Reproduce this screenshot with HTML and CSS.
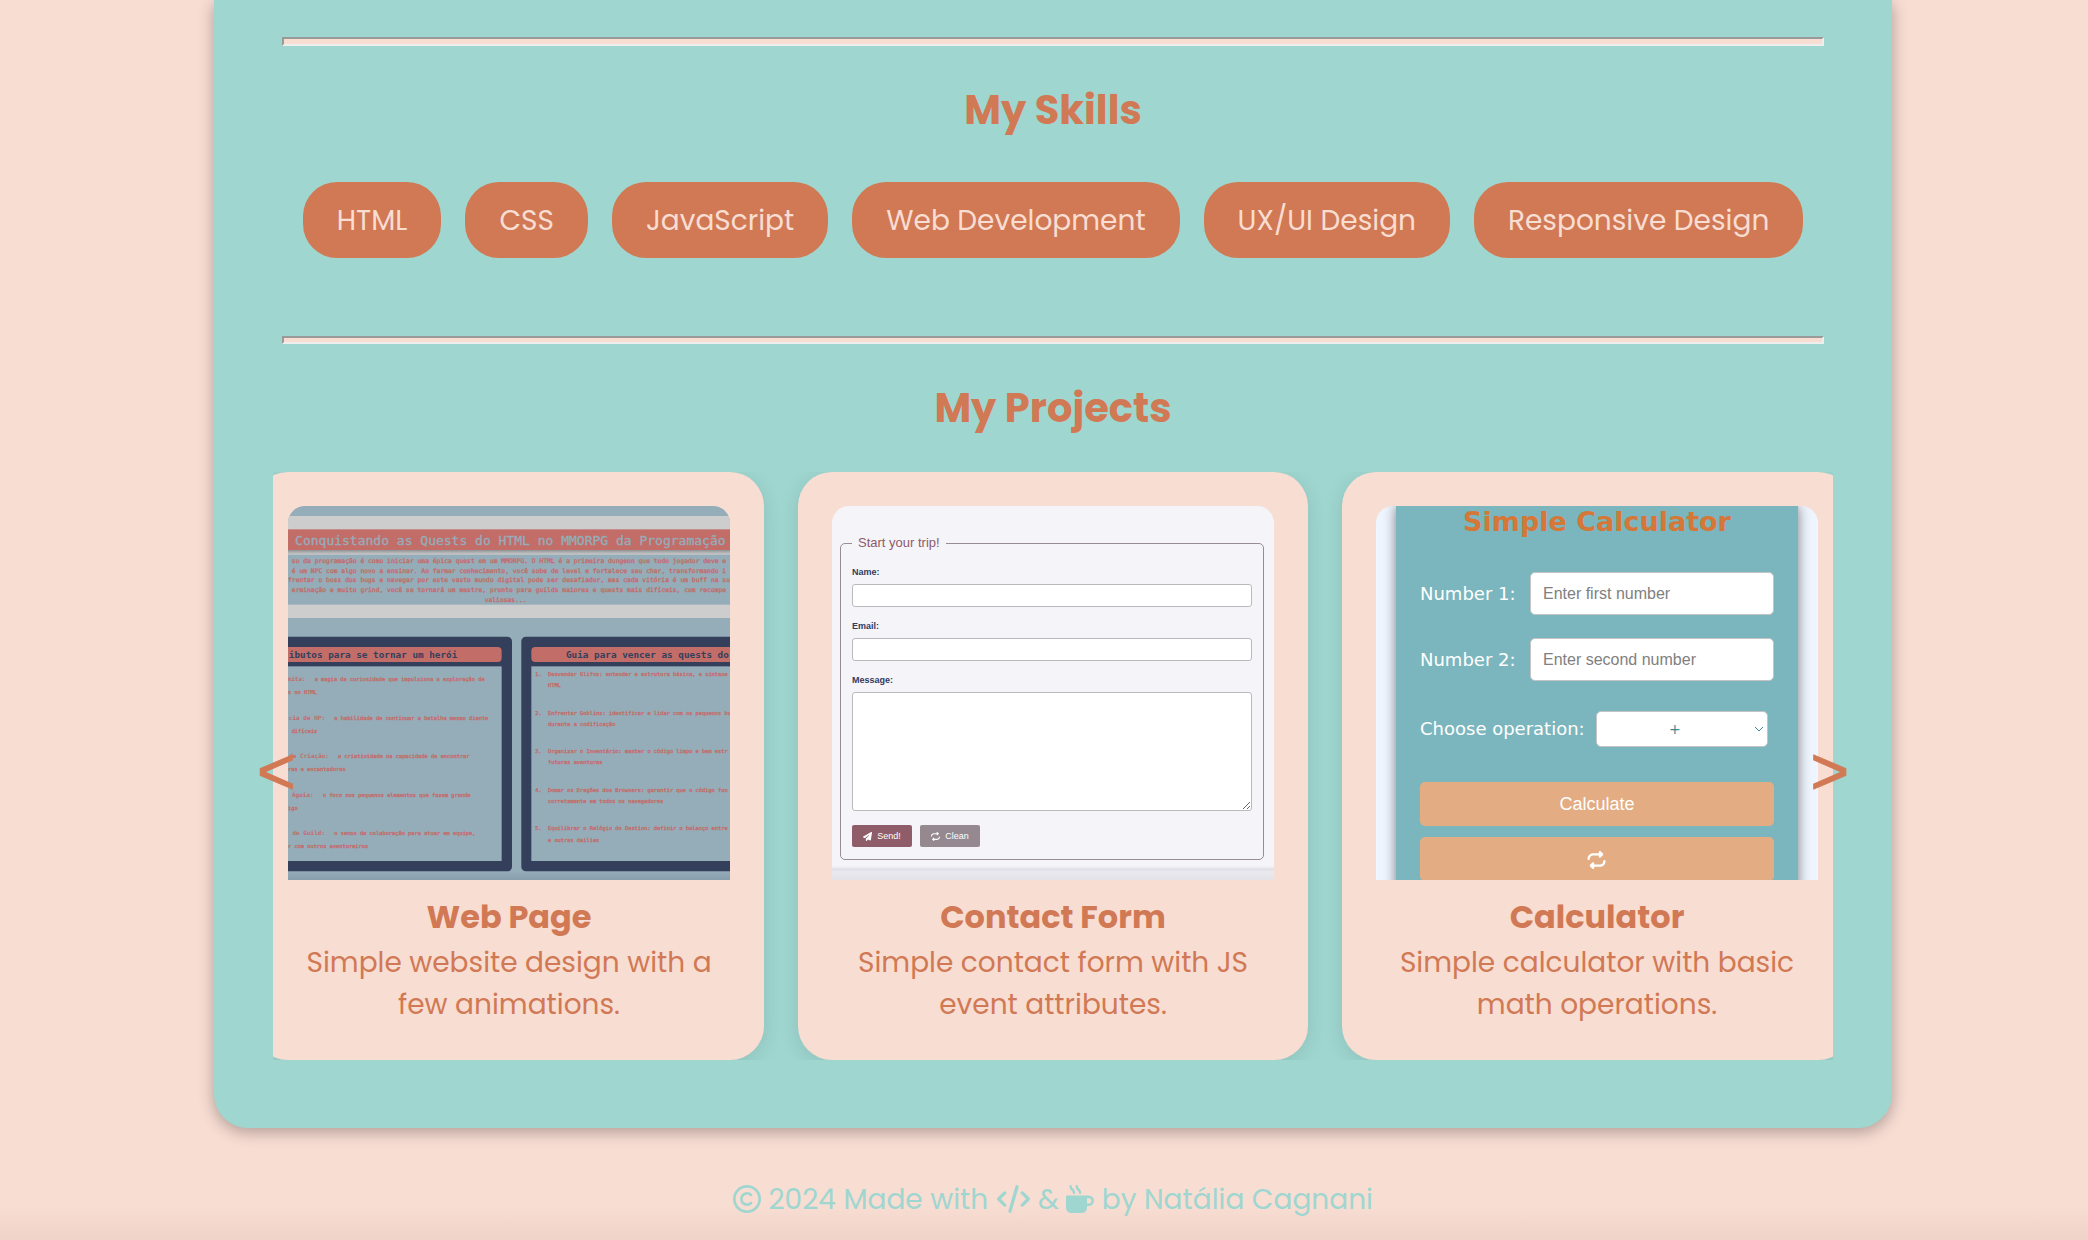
FILE: index.html
```html
<!DOCTYPE html>
<html lang="en">
<head>
<meta charset="utf-8">
<title>Natália Cagnani - Portfolio</title>
<link rel="stylesheet" href="styles.css">
</head>
<body>
<svg class="sprite" aria-hidden="true">
  <symbol id="repeat" viewBox="0 0 512 512"><path fill="currentColor" d="M0 224c0 17.700 14.300 32 32 32s32-14.300 32-32c0-53 43-96 96-96H320v32c0 12.900 7.800 24.600 19.800 29.600s25.700 2.200 34.900-6.900l64-64c12.500-12.500 12.500-32.800 0-45.300l-64-64c-9.200-9.200-22.900-11.900-34.900-6.900S320 19.100 320 32V64H160C71.600 64 0 135.600 0 224zm512 64c0-17.700-14.300-32-32-32s-32 14.300-32 32c0 53-43 96-96 96H192V352c0-12.900-7.800-24.600-19.800-29.600s-25.700-2.200-34.900 6.900l-64 64c-12.500 12.500-12.500 32.800 0 45.300l64 64c9.200 9.200 22.900 11.900 34.900 6.900s19.800-16.600 19.800-29.600V448H352c88.400 0 160-71.600 160-160z"/></symbol>
</svg>
<main class="panel">
  <hr class="rule">
  <section class="skills">
    <h2 class="heading">My Skills</h2>
    <ul class="skill-list">
      <li>HTML</li>
      <li>CSS</li>
      <li>JavaScript</li>
      <li>Web Development</li>
      <li>UX/UI Design</li>
      <li>Responsive Design</li>
    </ul>
  </section>
  <hr class="rule thin">
  <section class="projects">
    <h2 class="heading">My Projects</h2>
    <div class="carousel">
      <div class="track">
        <article class="card">
          <div class="thumb">
            <svg class="quest" viewBox="0 0 1326 1122" preserveAspectRatio="xMidYMid slice" role="img" aria-label="Web page preview">
              <defs>
                <linearGradient id="fade" x1="0" y1="0" x2="0" y2="1"><stop offset="0" stop-color="#8f9295"/><stop offset="1" stop-color="#cdcdcd"/></linearGradient>
                <linearGradient id="base" x1="0" y1="0" x2="0" y2="1"><stop offset="0" stop-color="#95acb9"/><stop offset="1" stop-color="#889ead"/></linearGradient>
              </defs>
              <rect width="1326" height="1122" fill="#95acb9"/>
              <rect y="1095" width="1326" height="27" fill="url(#base)"/>
              <rect y="30" width="1326" height="42" fill="#cdcdcd"/>
              <rect y="70" width="1326" height="62" fill="#c36d69"/>
              <rect y="132" width="1326" height="14" fill="url(#fade)"/>
              <rect y="296" width="1326" height="40" fill="#cdcdcd"/>
              <text class="q-title" x="667" y="117">Conquistando as Quests do HTML no MMORPG da Programação</text>
              <g class="q-intro">
                <text x="663" y="171">so da programação é como iniciar uma épica quest em um MMORPG. O HTML é a primeira dungeon que todo jogador deve e</text>
                <text x="663" y="200">é um NPC com algo novo a ensinar. Ao farmar conhecimento, você sobe de level e fortalece seu char, transformando i</text>
                <text x="663" y="229">frentar o boss dos bugs e navegar por este vasto mundo digital pode ser desafiador, mas cada vitória é um buff na su</text>
                <text x="663" y="258">erminação e muito grind, você se tornará um mestre, pronto para guilds maiores e quests mais difíceis, com recompe</text>
                <text x="653" y="287">valiosas...</text>
              </g>
              <rect x="-40" y="392" width="712" height="704" rx="14" fill="#333f5b"/>
              <rect x="700" y="392" width="700" height="704" rx="14" fill="#333f5b"/>
              <rect x="-40" y="423" width="681" height="45" rx="12" fill="#c36d69"/>
              <rect x="730" y="423" width="700" height="45" rx="12" fill="#c36d69"/>
              <rect x="-40" y="481" width="681" height="584" fill="#95acb9"/>
              <rect x="730" y="481" width="700" height="584" fill="#95acb9"/>
              <text class="q-head" x="508" y="456" text-anchor="end">ibutos para se tornar um herói</text>
              <text class="q-head" x="834" y="456">Guia para vencer as quests do</text>
              <g class="q-label">
                <text x="53" y="526">mita:</text>
                <text x="111" y="641">cia de HP:</text>
                <text x="123" y="756">de Criação:</text>
                <text x="77" y="872">Águia:</text>
                <text x="111" y="987">de Guild:</text>
              </g>
              <g class="q-item">
                <text x="80" y="526">a magia da curiosidade que impulsiona a exploração de</text>
                <text x="0" y="565">s no HTML</text>
                <text x="139" y="641">a habilidade de continuar a batalha mesmo diante</text>
                <text x="11" y="680">difíceis</text>
                <text x="150" y="756">a criatividade na capacidade de encontrar</text>
                <text x="0" y="795">ras e encantadoras</text>
                <text x="105" y="872">o foco nos pequenos elementos que fazem grande</text>
                <text x="0" y="911">igo</text>
                <text x="139" y="987">o senso de colaboração para atuar em equipe,</text>
                <text x="0" y="1026">r com outros aventureiros</text>
                <text x="742" y="511">1.</text><text x="780" y="511">Desvendar Glifos: entender a estrutura básica, a sintaxe</text>
                <text x="780" y="543">HTML</text>
                <text x="742" y="627">2.</text><text x="780" y="627">Enfrentar Goblins: identificar e lidar com os pequenos bu</text>
                <text x="780" y="659">durante a codificação</text>
                <text x="742" y="741">3.</text><text x="780" y="741">Organizar o Inventário: manter o código limpo e bem estr</text>
                <text x="780" y="775">futuras aventuras</text>
                <text x="742" y="857">4.</text><text x="780" y="857">Domar os Dragões dos Browsers: garantir que o código fun</text>
                <text x="780" y="891">corretamente em todos os navegadores</text>
                <text x="742" y="973">5.</text><text x="780" y="973">Equilibrar o Relógio do Destino: definir o balanço entre</text>
                <text x="780" y="1007">e outras dailies</text>
              </g>
            </svg>
          </div>
          <h3>Web Page</h3>
          <p>Simple website design with a few animations.</p>
        </article>
        <article class="card">
          <div class="thumb contact">
            <form>
              <fieldset>
                <legend>Start your trip!</legend>
                <label for="name">Name:</label>
                <input id="name" type="text">
                <label for="email">Email:</label>
                <input id="email" type="email">
                <label for="message">Message:</label>
                <textarea id="message"></textarea>
                <div class="actions">
                  <button type="button" class="send"><svg viewBox="0 0 512 512" aria-hidden="true"><path fill="currentColor" d="M498.100 5.600c10.100 7 15.400 19.100 13.500 31.200l-64 416c-1.500 9.700-7.400 18.200-16 23s-18.900 5.400-28 1.600L284 427.700l-68.500 74.100c-8.900 9.700-22.900 12.900-35.200 8.100S160 493.200 160 480V396.400c0-4 1.500-7.800 4.200-10.700L331.800 202.800c5.800-6.300 5.600-16-.4-22s-15.700-6.400-22-.7L106 360.800 17.700 316.600C7.100 311.300 .3 300.700 0 288.900s5.900-22.800 16.100-28.700l448-256c10.700-6.100 23.900-5.500 34 1.400z"/></svg>Send!</button>
                  <button type="button" class="clean"><svg aria-hidden="true"><use href="#repeat"/></svg>Clean</button>
                </div>
              </fieldset>
            </form>
          </div>
          <h3>Contact Form</h3>
          <p>Simple contact form with JS event attributes.</p>
        </article>
        <article class="card">
          <div class="thumb calc">
            <form class="calc-box">
              <h4>Simple Calculator</h4>
              <div class="field"><label for="n1">Number 1:</label><input id="n1" type="text" placeholder="Enter first number"></div>
              <div class="field"><label for="n2">Number 2:</label><input id="n2" type="text" placeholder="Enter second number"></div>
              <div class="field operation"><label for="op">Choose operation:</label>
                <span class="select"><select id="op"><option>+</option></select><svg viewBox="0 0 10 6" aria-hidden="true"><path d="M1 1l4 4 4-4" fill="none" stroke="currentColor"/></svg></span></div>
              <button type="button">Calculate</button>
              <button type="button" aria-label="Reset"><svg aria-hidden="true"><use href="#repeat"/></svg></button>
            </form>
          </div>
          <h3>Calculator</h3>
          <p>Simple calculator with basic math operations.</p>
        </article>
      </div>
      <button type="button" class="arrow prev">&lt;</button>
      <button type="button" class="arrow next">&gt;</button>
    </div>
  </section>
</main>
<footer class="footer">
  <p>
    <svg class="ico" viewBox="0 0 512 512" role="img" aria-label="Copyright"><g fill="none" stroke="currentColor" stroke-width="48" stroke-linecap="round"><circle cx="256" cy="256" r="232"/><path d="M330 330a104 104 0 1 1 0-148"/></g></svg>
    2024 Made with
    <svg class="ico wide" viewBox="0 0 640 512" role="img" aria-label="code"><g fill="none" stroke="currentColor" stroke-width="60" stroke-linecap="round" stroke-linejoin="round"><path d="M384 32L256 480M160 144L48 256l112 112M480 144l112 112-112 112"/></g></svg>
    &amp;
    <svg class="ico" viewBox="0 0 512 512" role="img" aria-label="coffee"><path fill="currentColor" fill-rule="evenodd" d="M24 192h392a96 96 0 0 1 0 192h-32v32a96 96 0 0 1-96 96H96a96 96 0 0 1-96-96V216a24 24 0 0 1 24-24zm360 48v96h32a48 48 0 0 0 0-96z"/><g fill="none" stroke="currentColor" stroke-width="44" stroke-linecap="round"><path d="M84 22c0 70 62 50 62 120M196 22c0 70 62 50 62 120"/></g></svg>
    by Natália Cagnani
  </p>
</footer>
</body>
</html>
```
FILE: styles.css
```css
:root {
  --peach: #f8ddd3;
  --mint: #9fd6d0;
  --clay: #d17954;
}

* { box-sizing: border-box; margin: 0; padding: 0; }

body {
  padding: 0 196px 0 214px;
  min-height: 100vh;
  background: linear-gradient(to top, #efd2c8 0, var(--peach) 34px);
  color: var(--clay);
  font-family: Poppins, Inter, sans-serif;
  font-size: 28px;
  line-height: 42px;
}

.sprite { display: none; }

.panel {
  padding: 37px 59px 68px;
  background: var(--mint);
  border-radius: 0 0 34px 34px;
  box-shadow: 0 4px 16px rgba(0, 0, 0, 0.3);
}

.rule {
  height: 9px;
  margin: 0 9px;
  background: var(--peach);
  border: 2px solid;
  border-color: #9a9a9a #eeeeee #eeeeee #9a9a9a;
}
.thin { height: 8px; }

.heading {
  padding: 34px 0;
  font-size: 40px;
  font-weight: 700;
  line-height: 60px;
  text-align: center;
}

.skills { padding-bottom: 78px; }

.skill-list {
  display: flex;
  flex-wrap: wrap;
  justify-content: center;
  gap: 24px;
  padding-top: 8px;
  list-style: none;
}

.skill-list li {
  padding: 18px 34px 16px;
  border-radius: 34px;
  background: var(--clay);
  color: var(--peach);
  text-align: center;
  white-space: nowrap;
}

.carousel { position: relative; }

.track {
  display: flex;
  justify-content: center;
  gap: 34px;
  overflow: hidden;
}

.card {
  flex: 0 0 calc((100% - 30px) / 3);
  padding: 34px;
  border-radius: 34px;
  background: var(--peach);
  box-shadow: 0 4px 20px rgba(0, 0, 0, 0.1);
  text-align: center;
}

.card h3 {
  margin-top: 12px;
  font-size: 32px;
  line-height: 50px;
}

.thumb {
  height: 374px;
  border-radius: 17px 17px 0 0;
  overflow: hidden;
}

.arrow {
  position: absolute;
  top: 50%;
  padding-top: 10px;
  border: 0;
  background: none;
  color: var(--clay);
  font-family: "Liberation Sans", Arial, sans-serif;
  font-size: 66px;
  line-height: 68px;
  -webkit-text-stroke: 1px var(--clay);
  transform: translateY(-50%);
}
.prev { left: -16px; }
.next { right: -16px; }

/* Web page preview */
.quest { display: block; width: 100%; height: 100%; }
.quest text { font-family: "DejaVu Sans Mono", monospace; fill: #c36d69; }
.quest .q-title { font-size: 39px; fill: #95acb9; text-anchor: middle; stroke: #95acb9; }
.quest .q-intro text { font-size: 19px; text-anchor: middle; stroke: #c36d69; }
.quest .q-head { font-size: 28px; font-weight: 700; fill: #333f5b; }
.quest .q-label text { font-size: 18px; font-weight: 700; text-anchor: end; }
.quest .q-item text { font-size: 16px; stroke: #c36d69; }

/* Contact form preview */
.contact {
  padding: 30px 10px 0 8px;
  background: linear-gradient(to top, #e3e2e8 0, #ebeaf0 9px, #dddce3 10px, #f4f4f9 14px);
  font-family: "Liberation Sans", Arial, sans-serif;
  font-size: 9px;
  line-height: 10px;
  text-align: left;
}
.contact fieldset {
  padding: 17px 11px 12px;
  border: 1px solid #9a8c95;
  border-radius: 5px;
}
.contact legend {
  padding: 0 6px;
  color: #8e5b68;
  font-size: 13px;
  line-height: 14px;
}
.contact label { display: block; color: #333a60; font-weight: 700; }
.contact input,
.contact textarea {
  display: block;
  width: 100%;
  height: 23px;
  margin: 7px 0 14px;
  border: 1px solid #bcb8bd;
  border-radius: 3px;
  background: #fff;
}
.contact textarea { height: 119px; }
.actions { display: flex; gap: 8px; }
.actions button {
  display: flex;
  align-items: center;
  justify-content: center;
  gap: 5px;
  width: 60px;
  height: 22px;
  border: 0;
  border-radius: 2px;
  color: #fff;
  font: inherit;
}
.actions svg { width: 9px; height: 9px; }
.send { background: #8e5d69; }
.clean { background: #95888f; }

/* Calculator preview */
.calc { padding: 0 20px; background: #f0f6ff; }
.calc-box {
  height: 400px;
  padding: 0 24px;
  background: #7bb6be;
  box-shadow: 0 0 12px rgba(0, 0, 0, 0.5);
  color: #fff;
  font-family: Verdana, "DejaVu Sans", sans-serif;
  font-size: 18px;
  line-height: 24px;
}
.calc h4 {
  padding-bottom: 35px;
  color: #d47737;
  font-size: 27px;
  line-height: 31px;
}
.field {
  display: flex;
  align-items: center;
  justify-content: space-between;
  margin-bottom: 23px;
  white-space: nowrap;
}
.field input,
.select select {
  border: 1px solid #c4c4c4;
  border-radius: 5px;
  background: #fff;
  font-family: "Liberation Sans", Arial, sans-serif;
  font-size: 16px;
}
.field input { width: 244px; height: 43px; padding: 0 12px; }
.field input::placeholder { color: #808080; }
.operation { margin: 30px 6px 35px 0; }
.select { position: relative; width: 172px; }
.select select {
  display: block;
  appearance: none;
  width: 100%;
  height: 36px;
  padding-right: 14px;
  color: #3d8796;
  font-family: inherit;
  font-size: 14px;
  text-align: center;
  text-align-last: center;
}
.select svg { position: absolute; top: 15px; right: 4px; width: 10px; height: 6px; color: #3d8796; }
.calc button {
  display: block;
  width: 100%;
  height: 44px;
  margin-bottom: 11px;
  border: 0;
  border-radius: 5px;
  background: #e3ac82;
  color: #fff;
  font-family: "Liberation Sans", Arial, sans-serif;
  font-size: 18px;
}
.calc button svg { width: 19px; height: 18px; vertical-align: middle; }

.footer { padding: 51px 0 19px; color: var(--mint); text-align: center; }
.ico { width: 28px; height: 28px; vertical-align: -4px; }
.wide { width: 35px; }
```
